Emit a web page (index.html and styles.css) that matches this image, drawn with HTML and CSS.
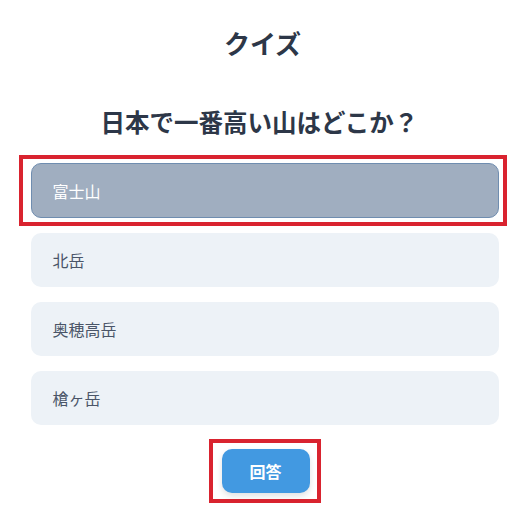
FILE: index.html
```html
<!DOCTYPE html>
<html lang="ja">
<head>
<meta charset="utf-8">
<title>クイズ</title>
<link rel="stylesheet" href="styles.css">
</head>
<body>
<main class="quiz">
  <h1 class="quiz-title">クイズ</h1>
  <h2 class="quiz-question">日本で一番高い山はどこか？</h2>
  <ul class="options">
    <li class="option option-selected marked">富士山</li>
    <li class="option">北岳</li>
    <li class="option">奥穂高岳</li>
    <li class="option">槍ヶ岳</li>
  </ul>
  <div class="actions">
    <div class="btn-mark">
      <button class="answer-btn" type="button">回答</button>
    </div>
  </div>
</main>
</body>
</html>
```

FILE: styles.css
```css
html, body {
  margin: 0;
  padding: 0;
  background: #ffffff;
}

body {
  font-family: "Noto Sans CJK JP", "Noto Sans", sans-serif;
  color: #2d3748;
  min-height: 521px;
}

.quiz {
  width: 468px;
  margin: 0 auto;
  padding-top: 25px;
  padding-bottom: 24px;
  display: flex;
  flex-direction: column;
}

.quiz-title {
  margin: 0;
  padding-right: 4px;
  font-size: 26px;
  line-height: 36px;
  font-weight: 700;
  text-align: center;
  color: #2d3748;
}

.quiz-question {
  margin: 45px 0 0;
  padding-right: 10px;
  font-size: 24.5px;
  line-height: 32px;
  font-weight: 700;
  text-align: center;
  color: #2d3748;
}

.options {
  list-style: none;
  margin: 25px 0 0;
  padding: 0;
  display: flex;
  flex-direction: column;
  gap: 15px;
}

.option {
  box-sizing: border-box;
  height: 54px;
  display: flex;
  align-items: center;
  padding: 0 21px;
  border: 1px solid transparent;
  border-radius: 10px;
  background: #edf2f7;
  color: #4a5568;
  font-size: 16px;
}

.option-selected {
  height: 55px;
  background: #a0aec0;
  border-color: #6f8db0;
  color: #ffffff;
}

.marked {
  position: relative;
}

.marked::after {
  content: "";
  position: absolute;
  top: -9px;
  left: -13px;
  right: -9px;
  bottom: -9px;
  border: 4px solid #d9232f;
  pointer-events: none;
}

.actions {
  display: flex;
  justify-content: center;
  margin-top: 14px;
}

.btn-mark {
  display: flex;
  padding: 6px 7px 6px 9px;
  border: 4px solid #d9232f;
}

.answer-btn {
  width: 88px;
  height: 44px;
  border: none;
  border-radius: 10px;
  background: #4299e1;
  color: #ffffff;
  font-family: "Noto Sans CJK JP", "Noto Sans", sans-serif;
  font-size: 16px;
  font-weight: 700;
  box-shadow: 0 3px 6px rgba(0, 0, 0, 0.12);
  cursor: pointer;
}
```
